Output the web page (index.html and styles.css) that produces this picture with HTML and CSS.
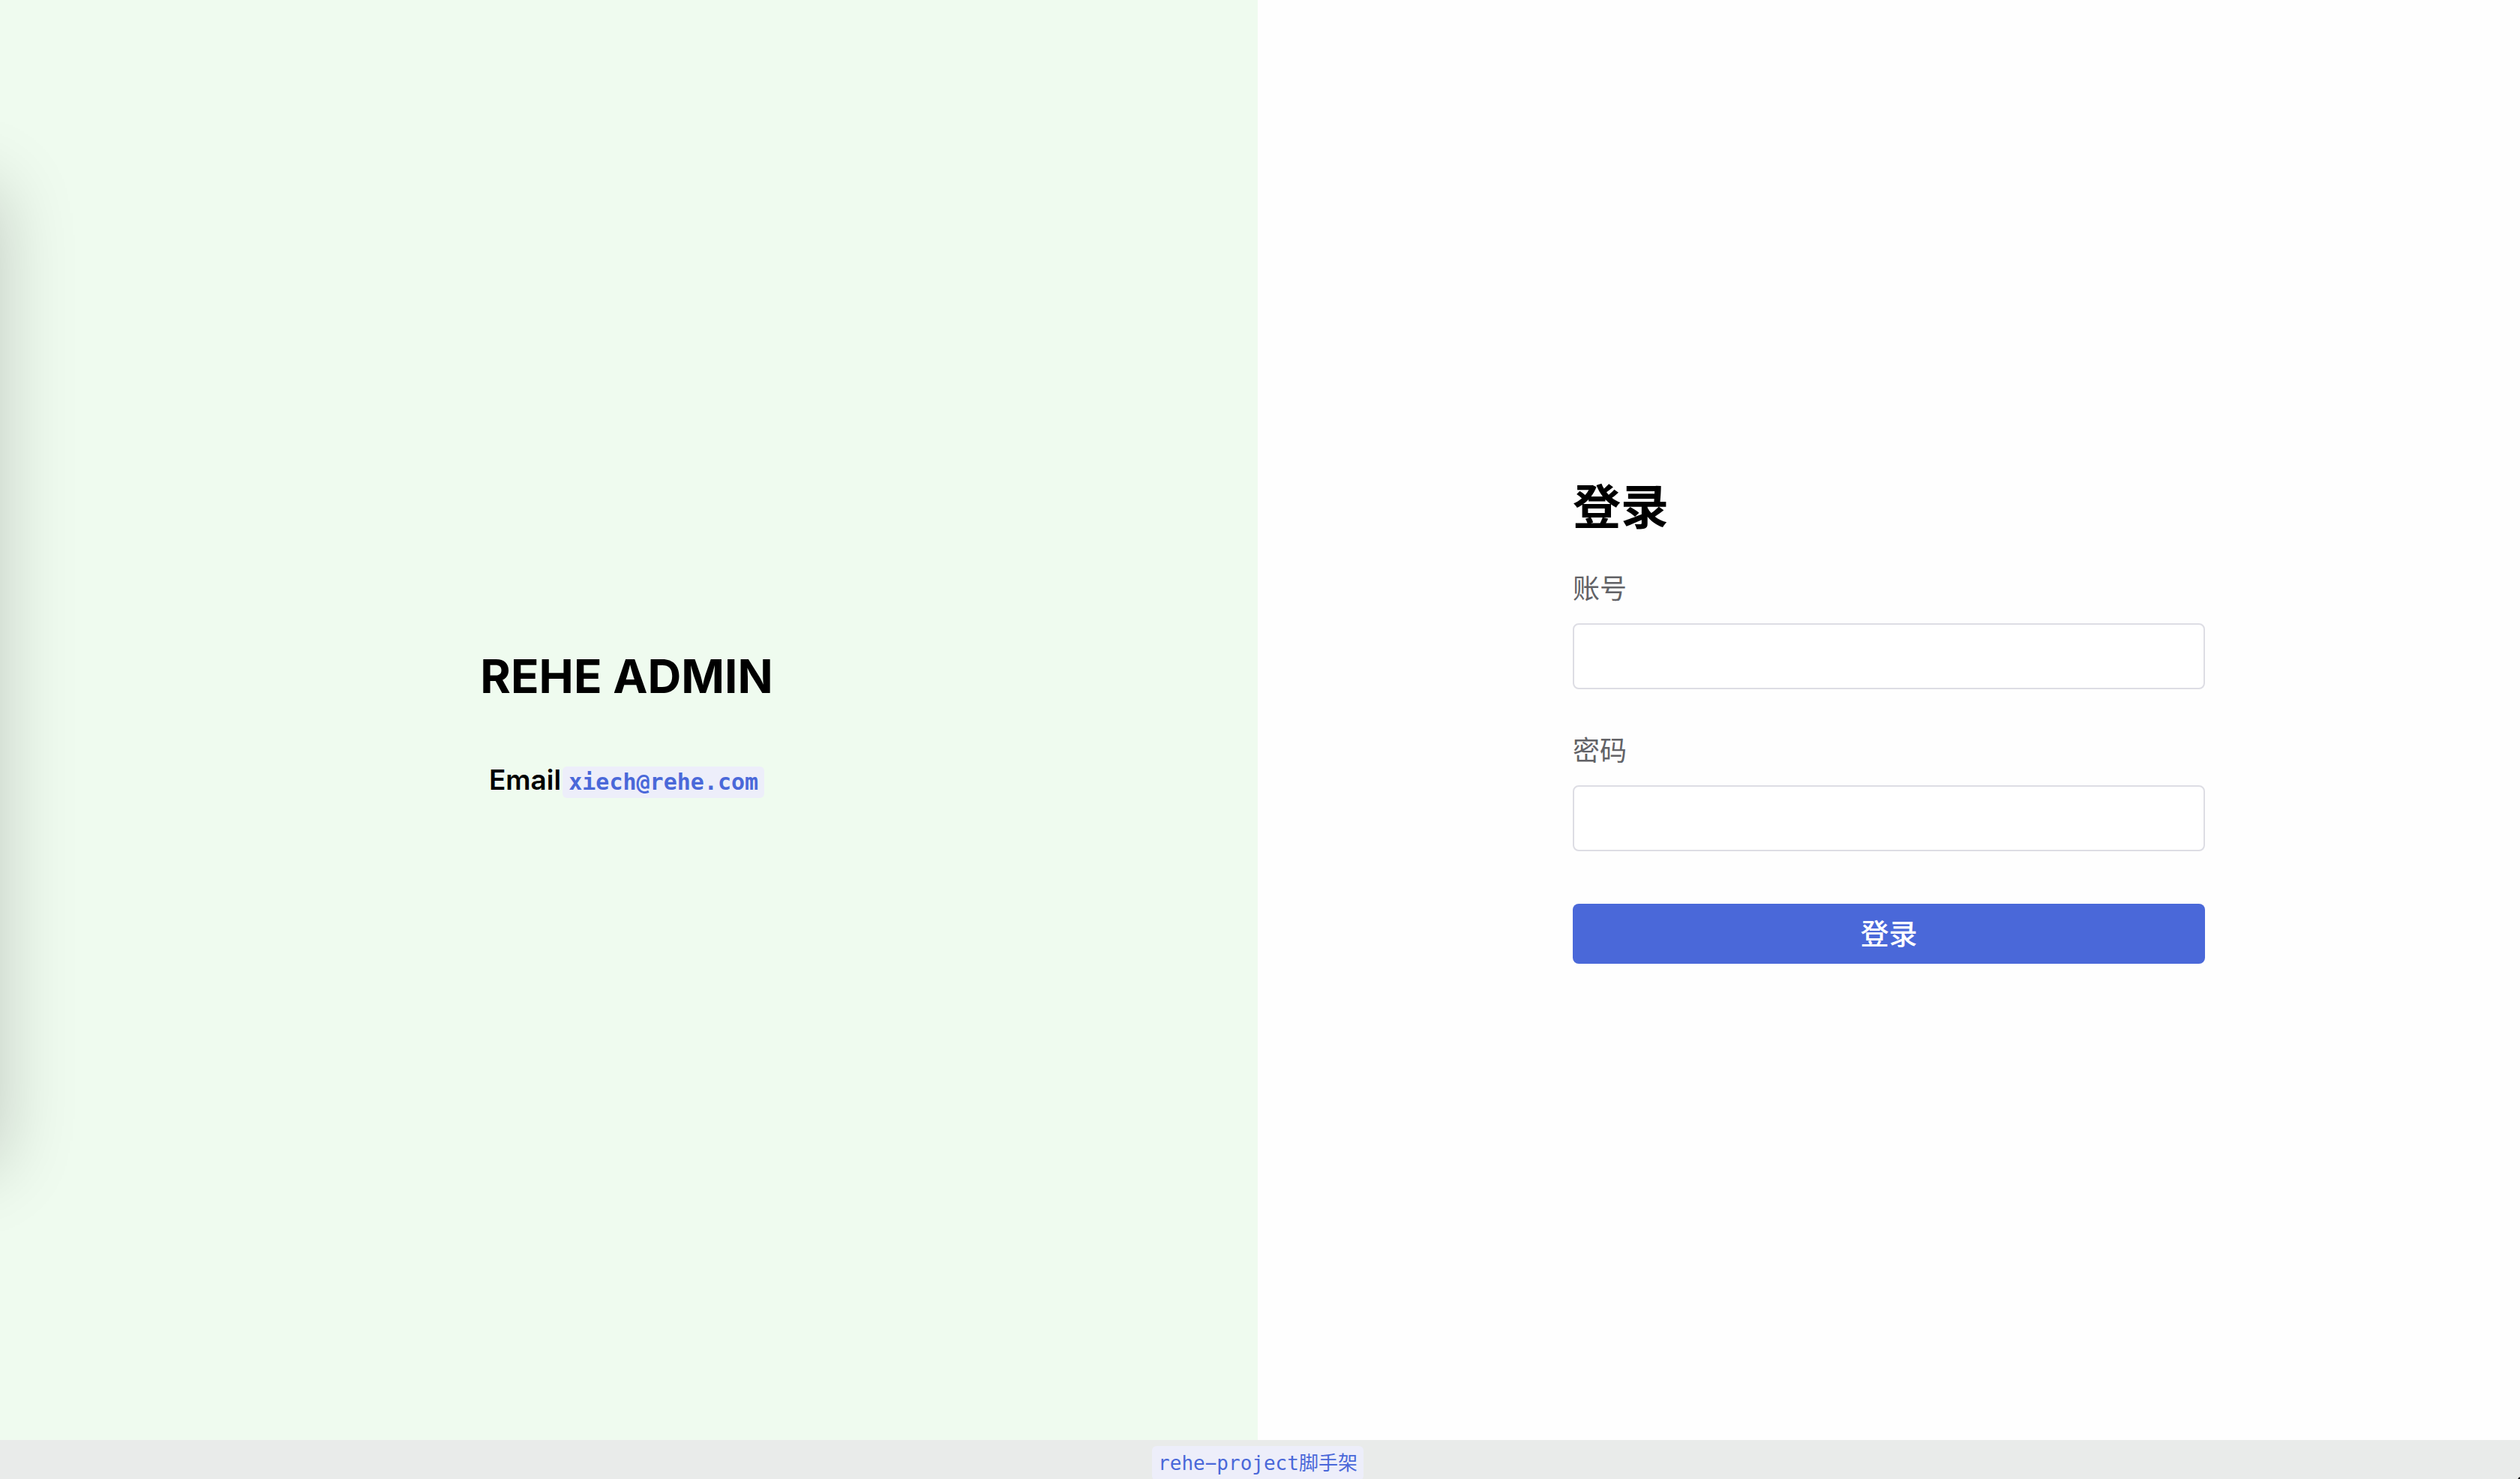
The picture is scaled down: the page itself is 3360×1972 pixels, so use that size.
FILE: index.html
```html
<!DOCTYPE html>
<html lang="zh-CN">
<head>
<meta charset="utf-8">
<title>REHE ADMIN</title>
<link rel="stylesheet" href="styles.css">
</head>
<body>
<main class="main">
  <section class="brand">
    <div class="drawer"></div>
    <h1 class="brand-title">REHE ADMIN</h1>
    <p class="brand-contact">Email<a class="code code-mail" href="mailto:xiech@rehe.com">xiech@rehe.com</a></p>
  </section>
  <section class="panel">
    <form class="form">
      <h2 class="form-title">登录</h2>
      <div class="field">
        <label class="label" for="account">账号</label>
        <input class="input" id="account" type="text">
      </div>
      <div class="field">
        <label class="label" for="password">密码</label>
        <input class="input" id="password" type="password">
      </div>
      <button class="submit" type="button">登录</button>
    </form>
  </section>
</main>
<footer class="footer">
  <a class="code code-footer" href="#">rehe−project脚手架</a>
</footer>
</body>
</html>
```
FILE: styles.css
```css
* {
  box-sizing: border-box;
}

body {
  margin: 0;
  min-height: 100vh;
  display: flex;
  flex-direction: column;
  background: #fefefe;
  color: #000;
  font-family: Inter, "Noto Sans CJK SC", sans-serif;
}

h1,
h2,
p {
  margin: 0;
}

.main {
  flex: 1;
  display: grid;
  grid-template-columns: 1677fr 1683fr;
}

.brand {
  position: relative;
  overflow: hidden;
  display: flex;
  flex-direction: column;
  align-items: center;
  justify-content: center;
  gap: 74px;
  padding: 6px 6px 0 0;
  background: #effbef;
}

/* collapsed drawer: only its shadow reaches into the page */
.drawer {
  position: absolute;
  top: 13%;
  bottom: 19%;
  right: 100%;
  width: 600px;
  box-shadow: 0 0 96px rgba(0, 0, 0, 0.2);
}

.brand-title {
  font-size: 62px;
  line-height: 80px;
  font-weight: 700;
}

.brand-contact {
  display: flex;
  align-items: baseline;
  gap: 2px;
  font-size: 37px;
  line-height: 48px;
  font-weight: 600;
}

.code {
  background: #edeefa;
  color: #4a68d9;
  border-radius: 6px;
  font-family: "DejaVu Sans Mono", "Noto Sans CJK SC", monospace;
  text-decoration: none;
}

.code-mail {
  padding: 0 8px;
  font-size: 30px;
  line-height: 42px;
  font-weight: 700;
}

.panel {
  display: flex;
  align-items: center;
  justify-content: center;
}

.form {
  width: 50.1%;
  display: flex;
  flex-direction: column;
}

.form-title {
  margin-bottom: 40px;
  font-size: 64px;
  line-height: 82px;
  font-weight: 700;
}

.field {
  display: flex;
  flex-direction: column;
  gap: 18px;
  margin-bottom: 54px;
}

.label {
  color: #626266;
  font-size: 36px;
  line-height: 56px;
}

.input {
  width: 100%;
  height: 88px;
  padding: 0 24px;
  border: 2px solid #dddde4;
  border-radius: 8px;
  background: #fff;
  font: inherit;
  font-size: 36px;
}

.submit {
  height: 80px;
  margin-top: 16px;
  padding: 0;
  border: 0;
  border-radius: 8px;
  background: #4a68d9;
  color: #fff;
  font-family: inherit;
  font-size: 38px;
  line-height: 80px;
  font-weight: 500;
}

.footer {
  height: 52px;
  padding: 8px 6px 0 0;
  overflow: hidden;
  display: flex;
  align-items: flex-start;
  justify-content: center;
  background: radial-gradient(circle at bottom right, #000 2px, transparent 3px), #e9ebea;
}

.code-footer {
  padding: 0 8px;
  font-size: 26px;
  line-height: 46px;
}
```
